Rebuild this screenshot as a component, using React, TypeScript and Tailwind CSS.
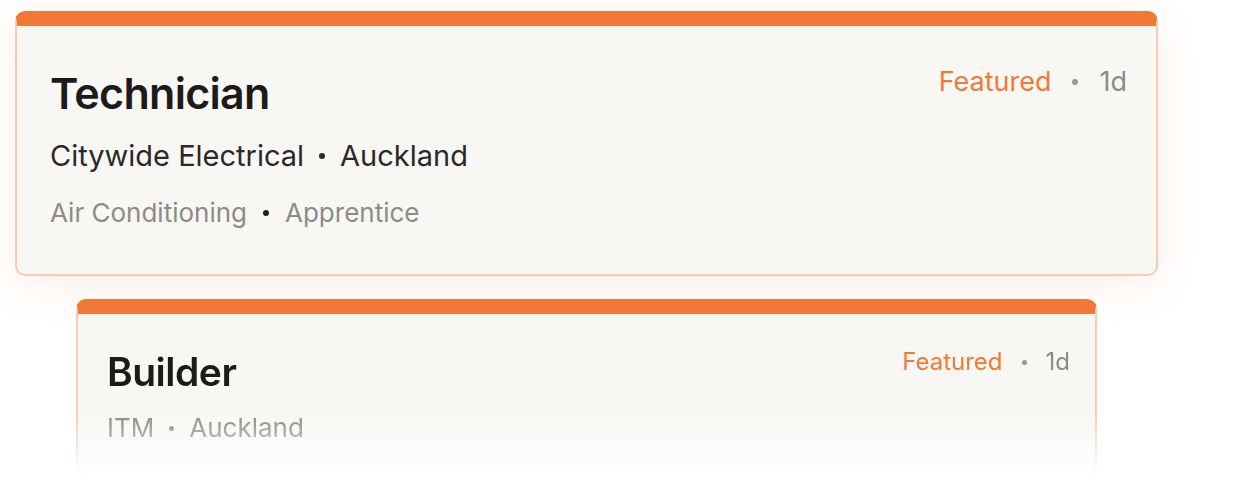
const font = { fontFamily: 'Inter, "Noto Sans", sans-serif' };

const Dot = ({ className }: { className: string }) => (
  <span className={`inline-block shrink-0 rounded-full ${className}`} />
);

// big card on top
const TopCard = () => (
  <div className="rounded-[10px] border-2 border-[#f6cdb3] border-t-[15px] border-t-[#f27935] bg-[#f9f7f4]">
    <div className="flex justify-between pl-[33px] pr-[29px] pt-[45px] pb-[48px]">
      <div>
        <h2 className="text-[43px] leading-[44px] font-semibold tracking-[-0.7px] text-[#1c1b1a]">Technician</h2>
        <div className="mt-[26px] flex items-center text-[29px] leading-[29px] text-[#2a2928]">
          <span>Citywide Electrical</span>
          <Dot className="mx-[15px] h-[6px] w-[6px] bg-[#2a2928]" />
          <span>Auckland</span>
        </div>
        <div className="mt-[30px] flex items-center text-[26px] leading-[26px] text-[#8d8b88]">
          <span>Air Conditioning</span>
          <Dot className="mx-[16px] h-[6px] w-[6px] bg-[#1f1e1d]" />
          <span>Apprentice</span>
        </div>
      </div>
      <div className="-mt-[3px] flex h-[27px] items-center text-[27px] leading-[27px]">
        <span className="text-[#f27935]">Featured</span>
        <Dot className="mx-[21px] h-[6px] w-[6px] bg-[#9a9896]" />
        <span className="text-[#8d8b88]">1d</span>
      </div>
    </div>
  </div>
);

// second card, fading out at the bottom
const SecondCard = () => (
  <div className="rounded-[10px] border-2 border-[#f6cdb3] border-t-[15px] border-t-[#f27935] bg-[#f9f7f4]">
    <div className="flex justify-between pl-[29px] pr-[25px] pt-[38px] pb-[34px]">
      <div>
        <h2 className="text-[39px] leading-[39px] font-semibold tracking-[-0.5px] text-[#1c1b1a]">Builder</h2>
        <div className="mt-[24px] flex items-center text-[26px] leading-[26px] text-[#8d8b88]">
          <span>ITM</span>
          <Dot className="mx-[15px] h-[5px] w-[5px] bg-[#8d8b88]" />
          <span>Auckland</span>
        </div>
      </div>
      <div className="-mt-[2px] flex h-[24px] items-center text-[24px] leading-[24px]">
        <span className="text-[#f27935]">Featured</span>
        <Dot className="mx-[19px] h-[5px] w-[5px] bg-[#9a9896]" />
        <span className="text-[#8d8b88]">1d</span>
      </div>
    </div>
  </div>
);

export default function App() {
  return (
    <div className="h-[480px] w-[1256px] overflow-hidden bg-white" style={font}>
      <div className="ml-[15px] mt-[11px] w-[1143px] rounded-[10px] shadow-[0_10px_40px_rgba(242,121,53,0.12)]">
        <TopCard />
      </div>
      <div className="ml-[76px] mt-[23px] w-[1021px] [mask-image:linear-gradient(to_bottom,black_65%,transparent_100%)]">
        <SecondCard />
      </div>
    </div>
  );
}
